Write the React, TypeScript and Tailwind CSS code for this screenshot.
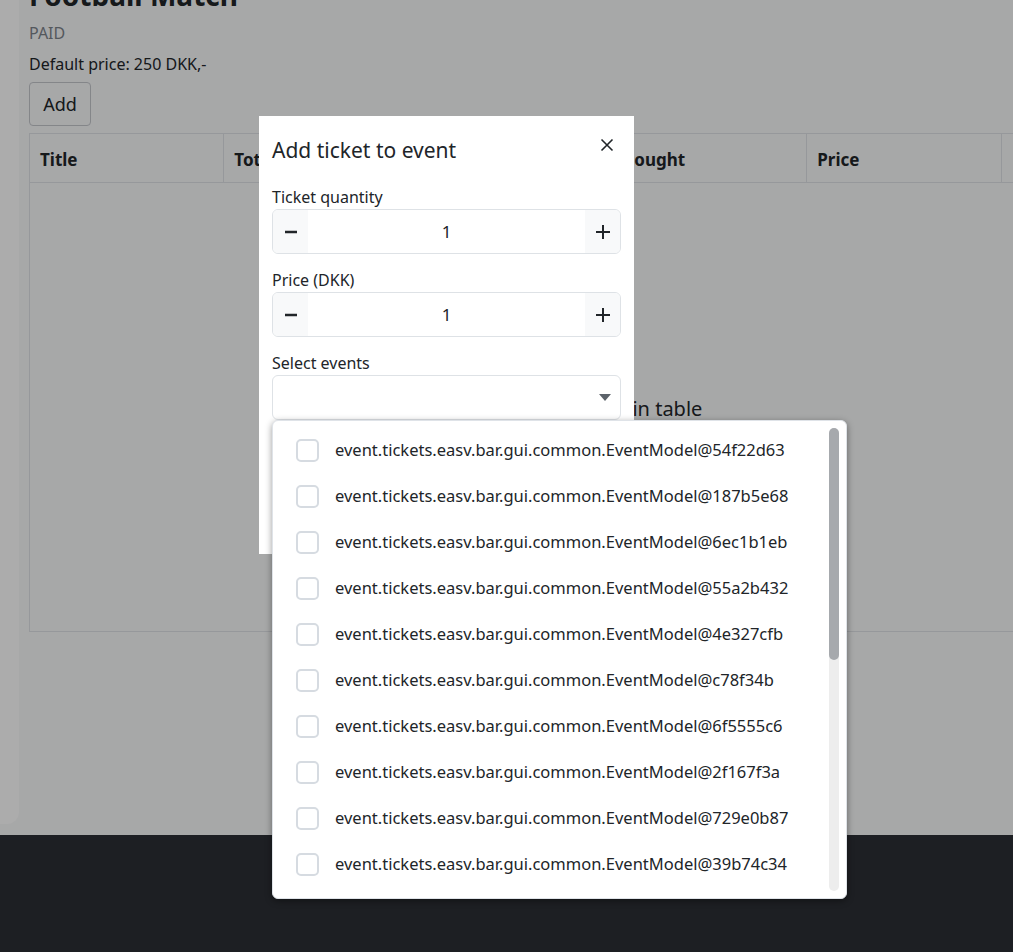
import { useState } from "react";

const events = [
  "54f22d63",
  "187b5e68",
  "6ec1b1eb",
  "55a2b432",
  "4e327cfb",
  "c78f34b",
  "6f5555c6",
  "2f167f3a",
  "729e0b87",
  "39b74c34",
  "1a2b9c0e",
  "5d7e3f21",
  "7b9a0c44",
  "3e4f6a12",
  "60c1d2e3",
  "2a9b8c7d",
  "4f0e1d2c",
  "71a2b3c4",
  "1c3d5e7f",
  "6a8b9cad",
];

const columns = ["Title", "Total tickets", "Available", "Bought", "Price", ""];

function MinusIcon() {
  return (
    <svg width="14" height="14" viewBox="0 0 14 14">
      <path d="M1 7h12" stroke="#212529" strokeWidth="2.4" />
    </svg>
  );
}

function PlusIcon() {
  return (
    <svg width="16" height="16" viewBox="0 0 16 16">
      <path d="M1 8h14M8 1v14" stroke="#212529" strokeWidth="2" />
    </svg>
  );
}

function Stepper({ value }: { value: number }) {
  return (
    <div className="flex h-[45px] overflow-hidden rounded-md border border-[#dee2e6]">
      <button className="flex w-[35px] items-center justify-center bg-[#f8f9fa]">
        <MinusIcon />
      </button>
      <div className="flex flex-1 items-center justify-center text-[17px] text-[#212529]">{value}</div>
      <button className="flex w-[35px] items-center justify-center bg-[#f8f9fa]">
        <PlusIcon />
      </button>
    </div>
  );
}

export default function App() {
  const [qty] = useState(1);
  const [price] = useState(1);

  return (
    <div className="relative h-[952px] w-[1013px] overflow-hidden bg-[#f8f9fa] font-['Noto_Sans',sans-serif] text-[#212529]">
      <div className="flex h-[835px]">
        <div className="h-[824px] w-[19px] shrink-0 rounded-br-xl bg-white" />
        <main className="min-w-0 flex-1 px-[10px]">
          <h2 className="-mt-[22px] text-[28px] leading-[34px] font-bold">Football Match</h2>
          <p className="mt-[9px] text-[16px] leading-[24px] text-[#7d838a]">PAID</p>
          <p className="mt-[7px] text-[16px] leading-[24px]">Default price: 250 DKK,-</p>
          <button className="mt-[6px] h-[44px] w-[62px] rounded border border-[#c4c7cc] bg-[#f8f9fa] text-[18px]">
            Add
          </button>
          <div className="mt-[7px] w-[1167px] border border-[#dee2e6]">
            <div className="flex h-[49px] border-b border-[#dee2e6]">
              {columns.map((c, i) => (
                <div
                  key={i}
                  className={
                    "flex flex-1 items-center px-[10px] pt-[3px] text-[17px] font-bold " +
                    (i < columns.length - 1 ? "border-r border-[#dee2e6]" : "")
                  }
                >
                  {c}
                </div>
              ))}
            </div>
            <div className="flex h-[448px] items-center justify-center pt-[4px] text-[20px]">No content in table</div>
          </div>
        </main>
      </div>
      <footer className="h-[117px] bg-[#2c2e34]" />

      {/* backdrop */}
      <div className="absolute inset-0 bg-black/[0.325]" />

      {/* modal */}
      <div className="absolute left-[259px] top-[116px] h-[438px] w-[375px] bg-white px-[13px]">
        <div className="flex items-start justify-between pt-[19px]">
          <h3 className="text-[21px] leading-[30px]">Add ticket to event</h3>
          <button className="mr-[7px] mt-[3px]">
            <svg width="14" height="14" viewBox="0 0 14 14">
              <path d="M1.5 1.5l11 11M12.5 1.5l-11 11" stroke="#212529" strokeWidth="1.6" />
            </svg>
          </button>
        </div>
        <label className="mt-[20px] block text-[16px] leading-[24px]">Ticket quantity</label>
        <Stepper value={qty} />
        <label className="mt-[14px] block text-[16px] leading-[24px]">Price (DKK)</label>
        <Stepper value={price} />
        <label className="mt-[14px] block text-[16px] leading-[24px]">Select events</label>
        <div className="flex h-[45px] items-center justify-end rounded-md border border-[#dee2e6] pr-[9px]">
          <svg width="12" height="7" viewBox="0 0 12 7">
            <path d="M0 0h12L6 7z" fill="#5c636a" />
          </svg>
        </div>
      </div>

      {/* dropdown */}
      <div className="absolute left-[272px] top-[420px] flex h-[479px] w-[575px] rounded-md border border-[#dfe3e8] bg-white shadow-[0_2px_7px_rgba(0,0,0,0.4)]">
        <ul className="min-w-0 flex-1 overflow-hidden pt-[6px] pl-[23px]">
          {events.map((e) => (
            <li key={e} className="flex h-[46px] items-center gap-[16px]">
              <span className="h-[23px] w-[23px] shrink-0 rounded-[5px] border-2 border-[#d6dbe1]" />
              <span className="whitespace-nowrap text-[16.5px]">event.tickets.easv.bar.gui.common.EventModel@{e}</span>
            </li>
          ))}
        </ul>
        <div className="my-[7px] mr-[7px] w-[10px] rounded-full bg-[#ededed]">
          <div className="h-[232px] rounded-full bg-[#a6a9ad]" />
        </div>
      </div>
    </div>
  );
}
